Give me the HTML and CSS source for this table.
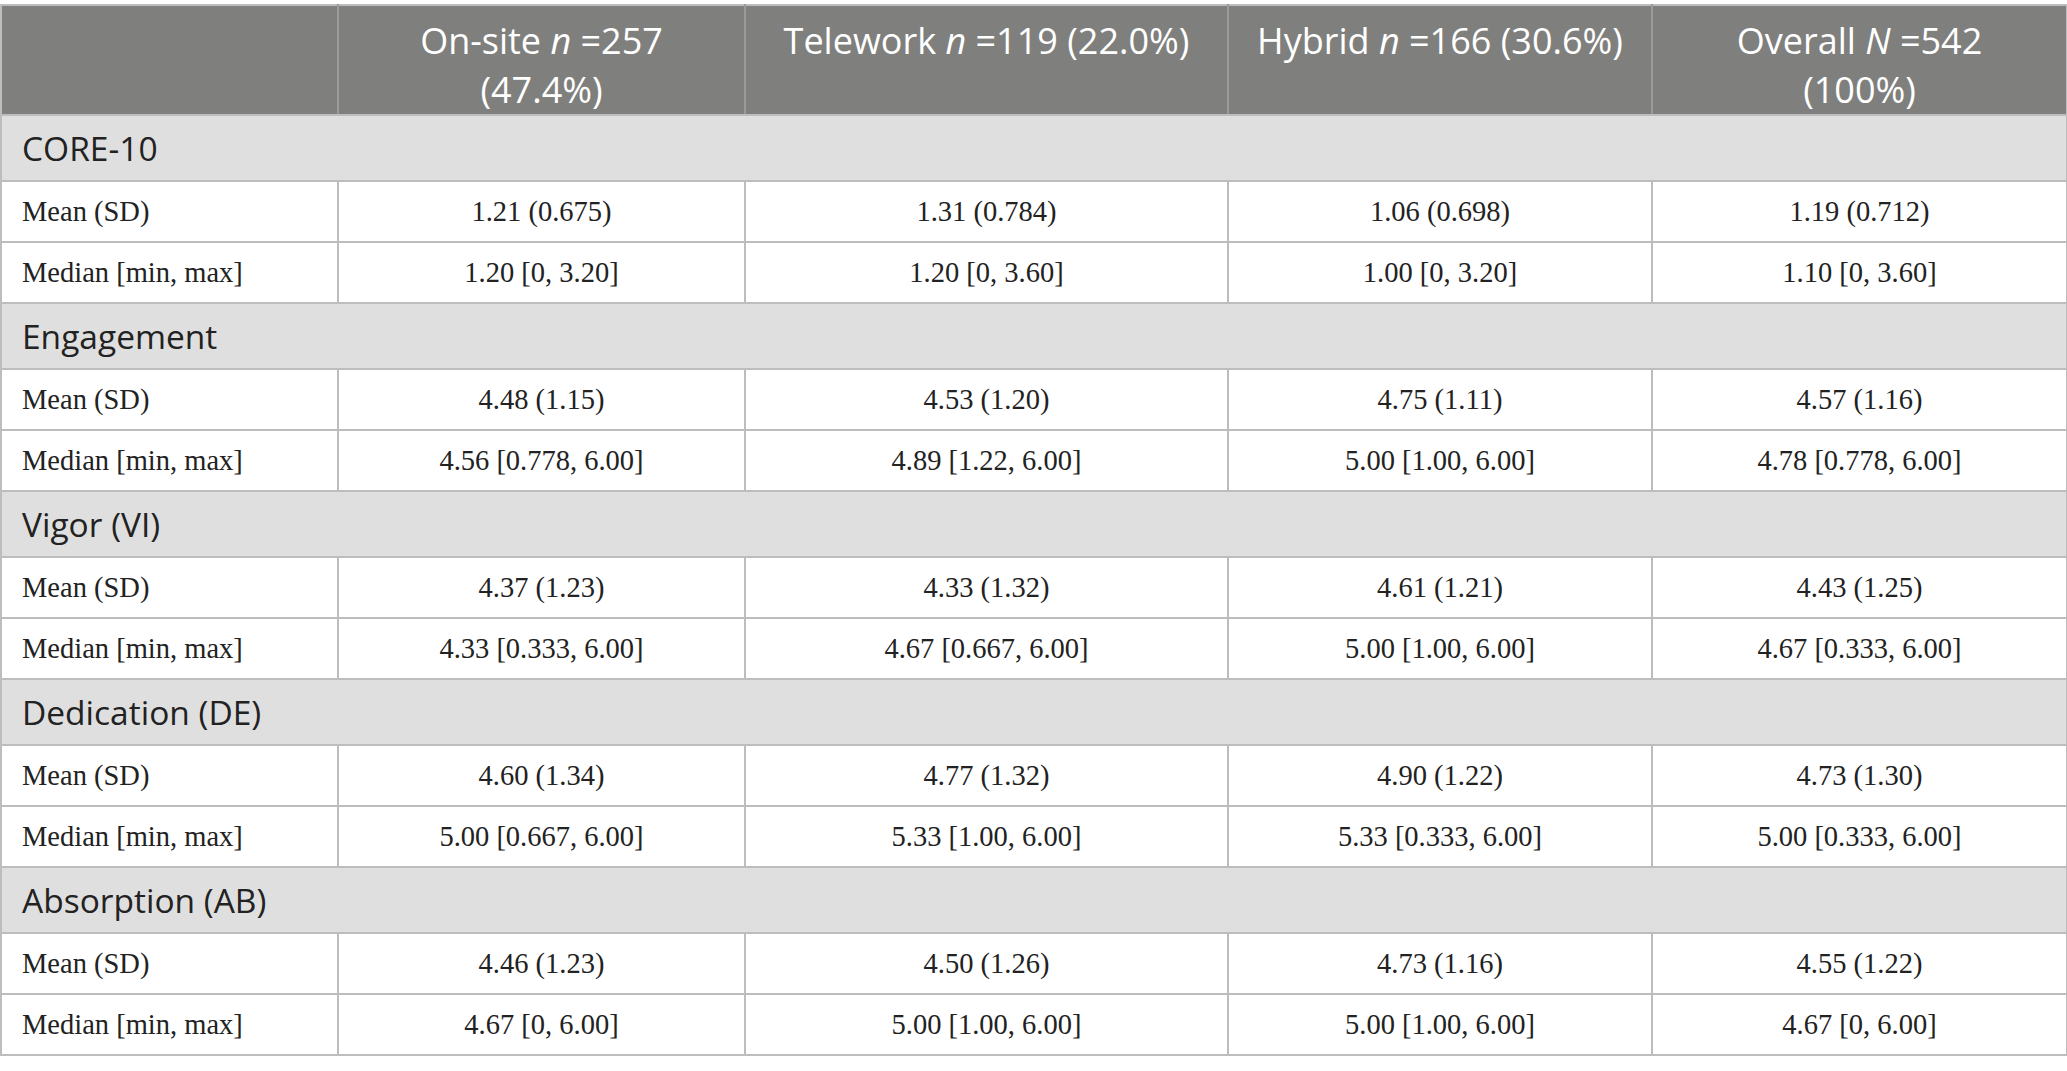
FILE: index.html
```html
<!DOCTYPE html>
<html>
<head>
<meta charset="utf-8">
<link rel="stylesheet" href="styles.css">
</head>
<body>
<table class="stats">
  <colgroup>
    <col class="c-label">
    <col class="c-onsite">
    <col class="c-tele">
    <col class="c-hybrid">
    <col class="c-overall">
  </colgroup>
  <thead>
    <tr class="head">
      <th></th>
      <th>On-site <i>n</i> =257<br>(47.4%)</th>
      <th>Telework <i>n</i> =119 (22.0%)</th>
      <th>Hybrid <i>n</i> =166 (30.6%)</th>
      <th>Overall <i>N</i> =542<br>(100%)</th>
    </tr>
  </thead>
  <tbody>
    <tr class="section"><td colspan="5">CORE-10</td></tr>
    <tr class="data"><td>Mean (SD)</td><td>1.21 (0.675)</td><td>1.31 (0.784)</td><td>1.06 (0.698)</td><td>1.19 (0.712)</td></tr>
    <tr class="data"><td>Median [min, max]</td><td>1.20 [0, 3.20]</td><td>1.20 [0, 3.60]</td><td>1.00 [0, 3.20]</td><td>1.10 [0, 3.60]</td></tr>

    <tr class="section"><td colspan="5">Engagement</td></tr>
    <tr class="data"><td>Mean (SD)</td><td>4.48 (1.15)</td><td>4.53 (1.20)</td><td>4.75 (1.11)</td><td>4.57 (1.16)</td></tr>
    <tr class="data"><td>Median [min, max]</td><td>4.56 [0.778, 6.00]</td><td>4.89 [1.22, 6.00]</td><td>5.00 [1.00, 6.00]</td><td>4.78 [0.778, 6.00]</td></tr>

    <tr class="section"><td colspan="5">Vigor (VI)</td></tr>
    <tr class="data"><td>Mean (SD)</td><td>4.37 (1.23)</td><td>4.33 (1.32)</td><td>4.61 (1.21)</td><td>4.43 (1.25)</td></tr>
    <tr class="data"><td>Median [min, max]</td><td>4.33 [0.333, 6.00]</td><td>4.67 [0.667, 6.00]</td><td>5.00 [1.00, 6.00]</td><td>4.67 [0.333, 6.00]</td></tr>

    <tr class="section"><td colspan="5">Dedication (DE)</td></tr>
    <tr class="data"><td>Mean (SD)</td><td>4.60 (1.34)</td><td>4.77 (1.32)</td><td>4.90 (1.22)</td><td>4.73 (1.30)</td></tr>
    <tr class="data"><td>Median [min, max]</td><td>5.00 [0.667, 6.00]</td><td>5.33 [1.00, 6.00]</td><td>5.33 [0.333, 6.00]</td><td>5.00 [0.333, 6.00]</td></tr>

    <tr class="section"><td colspan="5">Absorption (AB)</td></tr>
    <tr class="data"><td>Mean (SD)</td><td>4.46 (1.23)</td><td>4.50 (1.26)</td><td>4.73 (1.16)</td><td>4.55 (1.22)</td></tr>
    <tr class="data"><td>Median [min, max]</td><td>4.67 [0, 6.00]</td><td>5.00 [1.00, 6.00]</td><td>5.00 [1.00, 6.00]</td><td>4.67 [0, 6.00]</td></tr>
  </tbody>
</table>
</body>
</html>
```
FILE: styles.css
```css
html, body {
  margin: 0;
  padding: 0;
  background: #ffffff;
}

body {
  padding-top: 4px;
}

.stats {
  width: 2066px;
  border-collapse: collapse;
  table-layout: fixed;
  border: 2px solid #bdbdbd;
}

.c-label { width: 337px; }
.c-onsite { width: 407px; }
.c-tele { width: 483px; }
.c-hybrid { width: 424px; }
.c-overall { width: 415px; }

.head th {
  background: #7f807e;
  color: #ffffff;
  font-family: "Open Sans", "Noto Sans", sans-serif;
  font-weight: 400;
  font-size: 36px;
  line-height: 49px;
  text-align: center;
  vertical-align: top;
  white-space: nowrap;
  height: 110px;
  box-sizing: border-box;
  padding: 10px 6px 0;
  border-left: 2px solid #9a9b99;
  border-bottom: 2px solid #bdbdbd;
}

.head th:first-child {
  border-left: none;
}

.head i {
  font-style: italic;
}

.section td {
  background: #e0dfe0;
  color: #222222;
  font-family: "Open Sans", "Noto Sans", sans-serif;
  font-size: 33.5px;
  height: 64px;
  padding: 0 0 0 20px;
  border-bottom: 2px solid #bdbdbd;
}

.data td {
  font-family: "Liberation Serif", "Times New Roman", serif;
  font-size: 28.5px;
  color: #222222;
  text-align: center;
  height: 59px;
  padding: 0;
  border-left: 2px solid #bdbdbd;
  border-bottom: 2px solid #bdbdbd;
}

.data td:first-child {
  text-align: left;
  padding-left: 20px;
  border-left: none;
}
```
